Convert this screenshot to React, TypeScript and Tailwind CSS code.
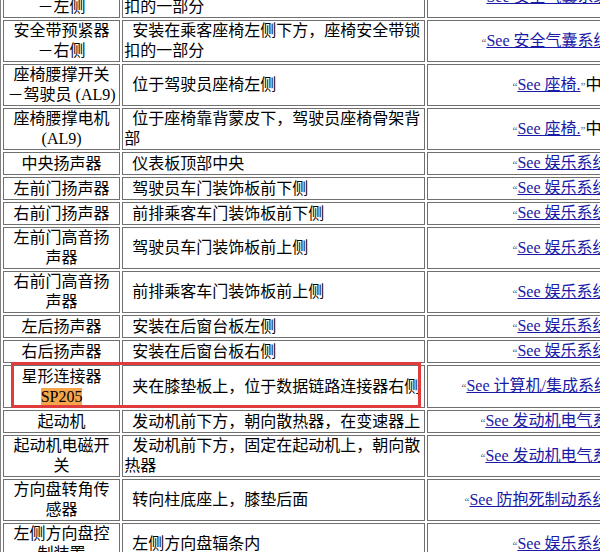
const rows: { a: React.ReactNode; b: string; c: string; h: number }[] = [
  { a: "安全带预紧器 －左侧", b: "安装在乘客座椅左侧下方，座椅安全带锁扣的一部分", c: "See 安全气囊系统", h: 42 },
  { a: "安全带预紧器 －右侧", b: "安装在乘客座椅左侧下方，座椅安全带锁扣的一部分", c: "See 安全气囊系统", h: 42 },
  { a: <>座椅腰撑开关 －驾驶员 (AL9)</>, b: "位于驾驶员座椅左侧", c: "See 座椅.", h: 42 },
  { a: <>座椅腰撑电机 (AL9)</>, b: "位于座椅靠背蒙皮下，驾驶员座椅骨架背部", c: "See 座椅.", h: 42 },
  { a: "中央扬声器", b: "仪表板顶部中央", c: "See 娱乐系统", h: 23 },
  { a: "左前门扬声器", b: "驾驶员车门装饰板前下侧", c: "See 娱乐系统", h: 23 },
  { a: "右前门扬声器", b: "前排乘客车门装饰板前下侧", c: "See 娱乐系统", h: 23 },
  { a: "左前门高音扬声器", b: "驾驶员车门装饰板前上侧", c: "See 娱乐系统", h: 42 },
  { a: "右前门高音扬声器", b: "前排乘客车门装饰板前上侧", c: "See 娱乐系统", h: 42 },
  { a: "左后扬声器", b: "安装在后窗台板左侧", c: "See 娱乐系统", h: 23 },
  { a: "右后扬声器", b: "安装在后窗台板右侧", c: "See 娱乐系统", h: 23 },
  { a: <>星形连接器<br /><span className="bg-[#f7a54a]">SP205</span></>, b: "夹在膝垫板上，位于数据链路连接器右侧", c: "See 计算机/集成系统", h: 43 },
  { a: "起动机", b: "发动机前下方，朝向散热器，在变速器上", c: "See 发动机电气系统", h: 22 },
  { a: "起动机电磁开关", b: "发动机前下方，固定在起动机上，朝向散热器", c: "See 发动机电气系统", h: 42 },
  { a: "方向盘转角传感器", b: "转向柱底座上，膝垫后面", c: "See 防抱死制动系统", h: 42 },
  { a: "左侧方向盘控制装置", b: "左侧方向盘辐条内", c: "See 娱乐系统", h: 42 },
];

const offsets: Record<string, string> = {
  "See 安全气囊系统": "pl-[54px]",
  "See 座椅.": "pl-[85px]",
  "See 娱乐系统": "pl-[85px]",
  "See 计算机/集成系统": "pl-[34px]",
  "See 发动机电气系统": "pl-[53px]",
  "See 防抱死制动系统": "pl-[37px]",
};

export default function App() {
  return (
    <div className="w-[600px] h-[552px] overflow-hidden bg-white relative" style={{ fontFamily: '"Liberation Serif","Noto Sans CJK SC",serif' }}>
      <div className="-mt-[27px] text-[16px] leading-[20px] text-black">
        <table className="border-separate border-spacing-[2px] border border-[#808080] w-[800px] table-fixed">
          <colgroup>
            <col className="w-[117px]" />
            <col className="w-[302px]" />
            <col className="w-[370px]" />
          </colgroup>
          <tbody>
            {rows.map((r, i) => (
              <tr key={i}>
                <td className="border border-[#707070] text-center px-[2px]" style={{ height: r.h }}>{r.a}</td>
                <td className="border border-[#707070] px-[1px]" style={{ height: r.h }}>
                  <span className="pl-[8px]">{r.b}</span>
                </td>
                <td className={`border border-[#707070] whitespace-nowrap ${offsets[r.c]}`} style={{ height: r.h }}>
                  <span className="text-[11px] text-gray-600">“</span>
                  <span className="text-[#1a1aa6] underline">{r.c}</span>
                  <span className="text-[11px] text-gray-600">”</span>中的说明
                </td>
              </tr>
            ))}
          </tbody>
        </table>
      </div>
      <div className="absolute left-[11px] top-[362px] w-[410px] h-[46px] border-[3px] border-[#e03c3c] pointer-events-none" />
    </div>
  );
}
